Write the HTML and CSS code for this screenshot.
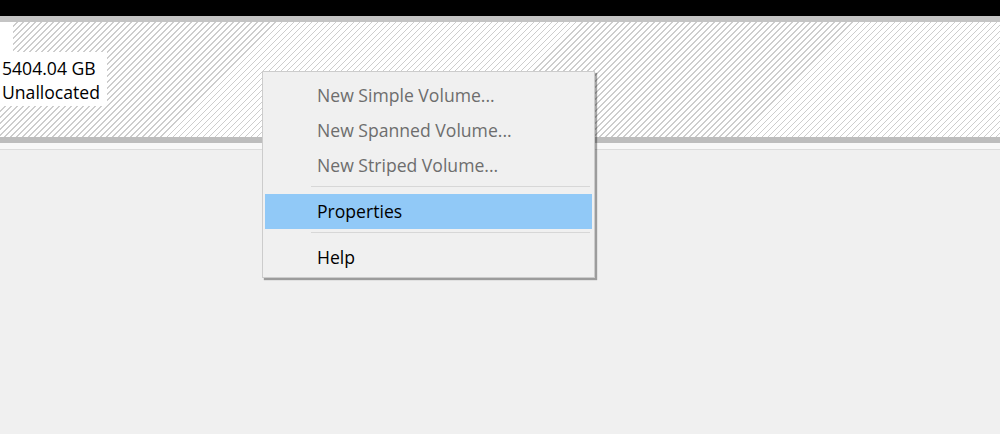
FILE: index.html
```html
<!DOCTYPE html>
<html lang="en">
<head>
    <meta charset="UTF-8">
    <title>Disk Management</title>
    <link rel="stylesheet" href="styles.css">
</head>
<body>
    <div class="topbar"></div>
    <div class="disk">
        <div class="volume">
            <div class="volume-corner"></div>
            <div class="volume-label">
                <span>5404.04 GB</span>
                <span>Unallocated</span>
            </div>
        </div>
    </div>
    <div class="divider"></div>
    <div class="workspace"></div>

    <ul class="context-menu">
        <li class="item disabled">New Simple Volume...</li>
        <li class="item disabled">New Spanned Volume...</li>
        <li class="item disabled">New Striped Volume...</li>
        <li class="separator"></li>
        <li class="item active">Properties</li>
        <li class="separator"></li>
        <li class="item">Help</li>
    </ul>
</body>
</html>
```

FILE: styles.css
```css
body {
    margin: 0;
    background: #f0f0f0;
    font-family: "Open Sans", "Noto Sans", sans-serif;
    font-size: 17.6px;
    color: #000;
    height: 434px;
    overflow: hidden;
}
.topbar {
    height: 16px;
    background: #000;
}
.disk {
    height: 115px;
    border-top: 6px solid #c4c4c4;
    border-bottom: 6px solid #bdbdbd;
    background: repeating-linear-gradient(135deg, #ffffff 0, #ffffff 3.2px, #cdcdcd 3.2px, #cdcdcd 4.25px);
}
.volume {
    display: flex;
    flex-direction: column;
    align-items: flex-start;
}
.volume-corner {
    width: 13px;
    height: 30px;
    background: #fff;
}
.volume-label {
    display: flex;
    flex-direction: column;
    background: #fff;
    width: 105px;
    padding: 4px 0 2px 2px;
    line-height: 24px;
    white-space: nowrap;
}
.divider {
    height: 6px;
    background: #f8f8f8;
    border-bottom: 1px solid #dcdcdc;
}
.workspace {
    height: 280px;
}
.context-menu {
    position: absolute;
    left: 262px;
    top: 71px;
    width: 327px;
    margin: 0;
    padding: 6px 2px 2px 2px;
    list-style: none;
    background: #f0f0f0;
    border: 1px solid #cccccc;
    box-shadow: 2px 2px 1px rgba(0, 0, 0, 0.35);
}
.item {
    height: 35px;
    line-height: 35px;
    padding-left: 52px;
}
.disabled {
    color: #6d6d6d;
}
.active {
    background: #91c9f7;
}
.separator {
    height: 1px;
    margin: 3px 2px 7px 46px;
    background: #d7d7d7;
}
```
